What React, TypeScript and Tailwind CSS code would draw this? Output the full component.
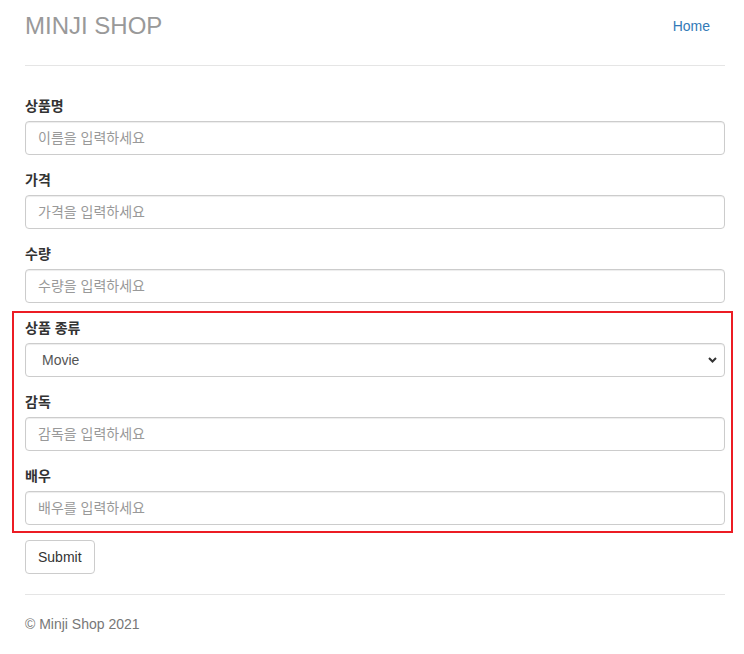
import React from "react";

const font = { fontFamily: '"Liberation Sans", Arial, "Noto Sans CJK KR", sans-serif' };

function Field({ label, placeholder }: { label: string; placeholder: string }) {
  return (
    <div className="flex flex-col">
      <label className="text-[14px] leading-[20px] font-bold text-[#333] mb-[5px]">{label}</label>
      <input
        placeholder={placeholder}
        className="h-[34px] w-full rounded-[4px] border border-[#ccc] bg-white px-3 text-[14px] text-[#555] placeholder:text-[#999] shadow-[inset_0_1px_1px_rgba(0,0,0,0.075)] outline-none"
      />
    </div>
  );
}

export default function App() {
  return (
    <div className="min-h-[654px] bg-white text-[#333]" style={font}>
      <div className="mx-[25px] w-[700px]">
        <header className="flex items-center justify-between border-b border-[#e5e5e5] pt-[6px] pb-[19px]">
          <h3 className="text-[24px] leading-[26px] text-[#999]">MINJI SHOP</h3>
          <nav className="flex">
            <a className="block px-[15px] py-[10px] text-[14px] leading-[20px] text-[#337ab7]">Home</a>
          </nav>
        </header>

        <form className="mt-[30px] flex flex-col gap-[15px]">
          <Field label="상품명" placeholder="이름을 입력하세요" />
          <Field label="가격" placeholder="가격을 입력하세요" />
          <Field label="수량" placeholder="수량을 입력하세요" />
          <div className="relative flex flex-col gap-[15px]">
            <div className="flex flex-col">
              <label className="text-[14px] leading-[20px] font-bold text-[#333] mb-[5px]">상품 종류</label>
              <div className="relative">
                <select className="h-[34px] w-full appearance-none rounded-[4px] border border-[#ccc] bg-white pl-4 pr-8 text-[14px] text-[#555] shadow-[inset_0_1px_1px_rgba(0,0,0,0.075)] outline-none">
                  <option>Movie</option>
                </select>
                <svg className="pointer-events-none absolute right-[8px] top-[14px]" width="9" height="6" viewBox="0 0 9 6">
                  <path d="M1 1 L4.5 4.5 L8 1" fill="none" stroke="#333" strokeWidth="2" />
                </svg>
              </div>
            </div>
            <Field label="감독" placeholder="감독을 입력하세요" />
            <Field label="배우" placeholder="배우를 입력하세요" />
            <div className="pointer-events-none absolute -top-[7px] -bottom-[8px] -left-[13px] -right-[8px] border-2 border-[#ec1c24]" />
          </div>
          <div>
            <button
              type="button"
              className="h-[34px] rounded-[4px] border border-[#ccc] bg-white px-3 text-[14px] text-[#333]"
            >
              Submit
            </button>
          </div>
        </form>

        <footer className="mt-5 border-t border-[#e5e5e5] pt-[19px] text-[14px] leading-[20px] text-[#777]">
          © Minji Shop 2021
        </footer>
      </div>
    </div>
  );
}
